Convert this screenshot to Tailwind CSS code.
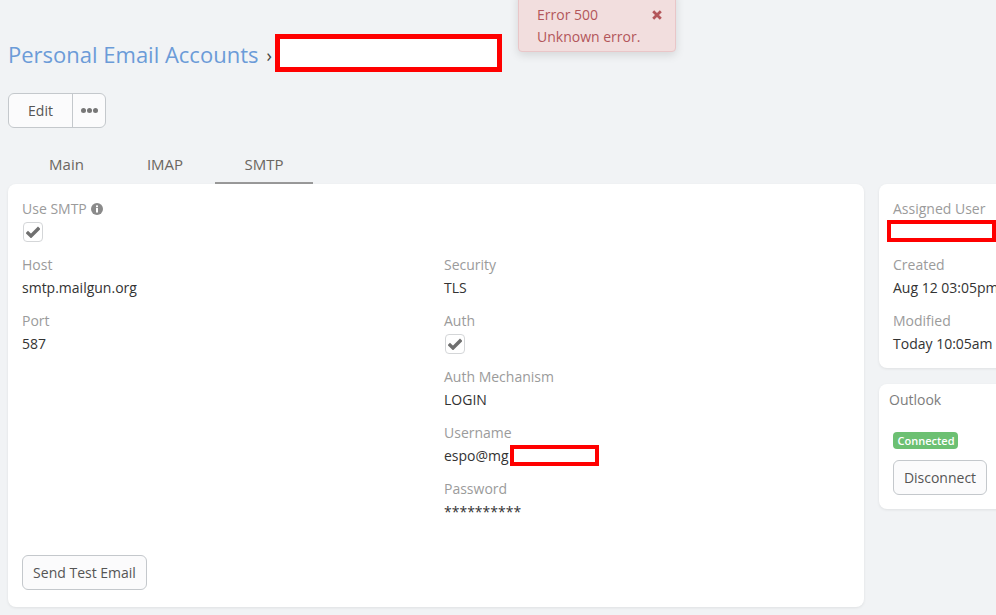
<!DOCTYPE html>
<html lang="en">
<head>
    <meta charset="UTF-8">
    <title>Personal Email Accounts</title>
    <script src="https://cdn.jsdelivr.net/npm/@tailwindcss/browser@4"></script>
</head>
<body class="relative h-[615px] overflow-hidden bg-[#f1f3f5] font-['Open_Sans',sans-serif] text-[14px] leading-[20px] text-[#333]">
    <!-- Error toast -->
    <div class="absolute left-[518px] top-[-10px] w-[158px] h-[62px] rounded-[4px] border border-[#e9c6c8] bg-[#f2dede] pl-[18px] pt-[13px] text-[#b3565a] shadow-[0_3px_10px_rgba(0,0,0,0.12)]">
        <div class="leading-[21px]">Error 500</div>
        <div class="mt-px leading-[21px]">Unknown error.</div>
        <svg class="absolute left-[133px] top-[19px] w-[10px] h-[10px]" viewBox="0 0 10 10"><path d="M1.2 1.2 8.8 8.8M8.8 1.2 1.2 8.8" stroke="#b3565a" stroke-width="2.8" fill="none"/></svg>
    </div>

    <div class="h-[93px] pl-2 pt-[34px]">
        <div class="flex h-[38px] items-center">
            <span class="relative top-px text-[22px] text-[#6b9bd8]">Personal Email Accounts</span>
            <span class="relative top-[2px] ml-[8px] w-[8px] text-[18px] text-[#444]">›</span>
            <div class="ml-px h-[38px] w-[227px] border-[5px] border-[#ff0000] bg-white"></div>
        </div>
    </div>

    <div class="ml-2 flex h-[35px] w-[98px] rounded-[6px] border border-[#c4c8cc] bg-[#fbfbfc] text-[#555]">
        <div class="flex w-[64px] items-center justify-center border-r border-[#c4c8cc]">Edit</div>
        <div class="flex flex-1 items-center justify-center gap-px">
            <span class="h-[5px] w-[5px] rounded-full bg-[#777]"></span>
            <span class="h-[5px] w-[5px] rounded-full bg-[#777]"></span>
            <span class="h-[5px] w-[5px] rounded-full bg-[#777]"></span>
        </div>
    </div>

    <div class="ml-[19px] mt-[18px] flex h-[38px] text-[15px] text-[#6b6660]">
        <div class="mr-[3px] flex w-[95px] items-center justify-center pb-[3px]">Main</div>
        <div class="mr-[2px] flex w-[96px] items-center justify-center pb-[3px]">IMAP</div>
        <div class="flex w-[98px] items-center justify-center border-b-[2px] border-[#999] pb-px">SMTP</div>
    </div>

    <div class="flex items-start">
        <!-- Main panel -->
        <div class="ml-2 h-[423px] w-[856px] shrink-0 rounded-[8px] bg-white pl-[14px] pt-[15px] shadow-[0_1px_3px_rgba(0,0,0,0.08)]">
            <div class="h-[56px]">
                <div class="flex h-[20px] items-center gap-[4px] text-[#9b9b9b]">
                    Use SMTP
                    <svg class="h-[12px] w-[12px]" viewBox="0 0 12 12"><circle cx="6" cy="6" r="6" fill="#8a8a8a"/><rect x="5" y="5" width="2" height="4.5" fill="#fff"/><rect x="5" y="2.4" width="2" height="1.8" fill="#fff"/></svg>
                </div>
                <div class="ml-px mt-[3px] flex h-[20px] w-[20px] items-center justify-center rounded-[4px] border border-[#d4d6d8]">
                    <svg class="h-[12px] w-[14px]" viewBox="0 0 14 12"><path d="M0.8 6 5 10 13.2 1.8" stroke="#707070" stroke-width="3.4" fill="none"/></svg>
                </div>
            </div>
            <div class="grid grid-cols-[422px_1fr]">
                <div>
                    <div class="h-[56px]">
                        <div class="h-[20px] text-[#9b9b9b]">Host</div>
                        <div class="mt-[3px] h-[20px]">smtp.mailgun.org</div>
                    </div>
                    <div class="h-[56px]">
                        <div class="h-[20px] text-[#9b9b9b]">Port</div>
                        <div class="mt-[3px] h-[20px]">587</div>
                    </div>
                </div>
                <div>
                    <div class="h-[56px]">
                        <div class="h-[20px] text-[#9b9b9b]">Security</div>
                        <div class="mt-[3px] h-[20px]">TLS</div>
                    </div>
                    <div class="h-[56px]">
                        <div class="h-[20px] text-[#9b9b9b]">Auth</div>
                        <div class="ml-px mt-[3px] flex h-[20px] w-[20px] items-center justify-center rounded-[4px] border border-[#d4d6d8]">
                            <svg class="h-[12px] w-[14px]" viewBox="0 0 14 12"><path d="M0.8 6 5 10 13.2 1.8" stroke="#707070" stroke-width="3.4" fill="none"/></svg>
                        </div>
                    </div>
                    <div class="h-[56px]">
                        <div class="h-[20px] text-[#9b9b9b]">Auth Mechanism</div>
                        <div class="mt-[3px] h-[20px]">LOGIN</div>
                    </div>
                    <div class="h-[56px]">
                        <div class="h-[20px] text-[#9b9b9b]">Username</div>
                        <div class="mt-[2px] flex h-[21px] items-center">espo@mg<div class="ml-px h-[21px] w-[89px] border-[4px] border-[#ff0000] bg-white"></div></div>
                    </div>
                    <div class="h-[56px]">
                        <div class="h-[20px] text-[#9b9b9b]">Password</div>
                        <div class="mt-[3px] h-[20px]">**********</div>
                    </div>
                </div>
            </div>
            <div class="mt-[20px] flex h-[35px] w-[125px] items-center justify-center rounded-[6px] border border-[#c4c8cc] bg-[#fbfbfc] text-[#555]">Send Test Email</div>
        </div>

        <!-- Side panels -->
        <div class="ml-[15px] w-[160px] shrink-0">
            <div class="h-[184px] rounded-[8px] bg-white pl-[14px] pt-[15px] shadow-[0_1px_3px_rgba(0,0,0,0.08)]">
                <div class="h-[56px]">
                    <div class="h-[20px] text-[#9b9b9b]">Assigned User</div>
                    <div class="ml-[-6px] mt-[1px] h-[22px] w-[109px] border-[4px] border-[#ff0000] bg-white"></div>
                </div>
                <div class="h-[56px]">
                    <div class="h-[20px] text-[#9b9b9b]">Created</div>
                    <div class="mt-[3px] h-[20px] whitespace-nowrap">Aug 12 03:05pm</div>
                </div>
                <div class="h-[56px]">
                    <div class="h-[20px] text-[#9b9b9b]">Modified</div>
                    <div class="mt-[3px] h-[20px] whitespace-nowrap">Today 10:05am</div>
                </div>
            </div>
            <div class="mt-[16px] h-[125px] rounded-[8px] bg-white pl-[10px] pt-[6px] shadow-[0_1px_3px_rgba(0,0,0,0.08)]">
                <div class="h-[20px] text-[#7d7d7d]">Outlook</div>
                <div class="ml-[4px] mt-[22px] flex h-[17px] w-[65px] items-center justify-center rounded-[4px] bg-[#6cc072] pl-px text-[11px] font-semibold text-white">Connected</div>
                <div class="ml-[4px] mt-[11px] flex h-[35px] w-[94px] items-center justify-center rounded-[6px] border border-[#c4c8cc] bg-[#fbfbfc] text-[#555]">Disconnect</div>
            </div>
        </div>
    </div>
</body>
</html>
